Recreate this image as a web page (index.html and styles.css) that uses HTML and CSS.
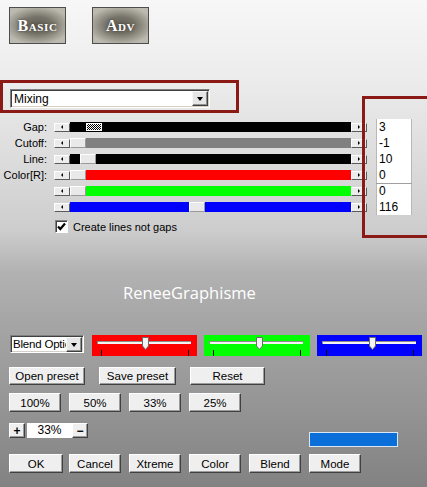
FILE: index.html
```html
<!DOCTYPE html>
<html>
<head>
<meta charset="utf-8">
<link rel="stylesheet" href="styles.css">
</head>
<body>
<div class="app">
  <div class="tabs">
    <div class="tab">Basic</div>
    <div class="tab">Adv</div>
  </div>

  <div class="mode-box">
    <div class="select mode-select">
      <span class="select-text">Mixing</span>
      <span class="drop"></span>
    </div>
  </div>

  <div class="sliders">
    <div class="row">
      <span class="label">Gap:</span>
      <span class="sbtn left"></span>
      <span class="track black"><span class="thumb dither" style="margin-left:16px"></span></span>
      <span class="sbtn right"></span>
      <span class="field">3</span>
    </div>
    <div class="row">
      <span class="label">Cutoff:</span>
      <span class="sbtn left"></span>
      <span class="track gray"><span class="thumb" style="margin-left:0px"></span></span>
      <span class="sbtn right"></span>
      <span class="field">-1</span>
    </div>
    <div class="row">
      <span class="label">Line:</span>
      <span class="sbtn left"></span>
      <span class="track black"><span class="thumb" style="margin-left:10px"></span></span>
      <span class="sbtn right"></span>
      <span class="field">10</span>
    </div>
    <div class="row">
      <span class="label">Color[R]:</span>
      <span class="sbtn left"></span>
      <span class="track red"><span class="thumb" style="margin-left:0px"></span></span>
      <span class="sbtn right"></span>
      <span class="field">0</span>
    </div>
    <div class="row">
      <span class="label"></span>
      <span class="sbtn left"></span>
      <span class="track green"><span class="thumb" style="margin-left:0px"></span></span>
      <span class="sbtn right"></span>
      <span class="field group-start">0</span>
    </div>
    <div class="row">
      <span class="label"></span>
      <span class="sbtn left"></span>
      <span class="track blue"><span class="thumb" style="margin-left:119px"></span></span>
      <span class="sbtn right"></span>
      <span class="field">116</span>
    </div>
  </div>

  <div class="check-row">
    <span class="checkbox"><svg width="11" height="11" viewBox="0 0 11 11"><path d="M2 5.5 L4.3 8 L9 2.5" fill="none" stroke="#000" stroke-width="2.2"/></svg></span>
    <span>Create lines not gaps</span>
  </div>

  <div class="brand">ReneeGraphisme</div>

  <div class="color-row">
    <div class="select blend-select">
      <span class="select-text">Blend Options</span>
      <span class="drop"></span>
    </div>
    <div class="swatch red-sw">
      <div class="groove"></div>
      <svg class="knob" style="left:50px" width="7" height="13" viewBox="0 0 7 13"><path d="M0.5 0.5H6.5V9L3.5 12.5L0.5 9Z" fill="#f2f2f2" stroke="#6a6a6a"/></svg>
      <div class="ticks"><span></span><span></span></div>
    </div>
    <div class="swatch green-sw">
      <div class="groove"></div>
      <svg class="knob" style="left:52px" width="7" height="13" viewBox="0 0 7 13"><path d="M0.5 0.5H6.5V9L3.5 12.5L0.5 9Z" fill="#f2f2f2" stroke="#6a6a6a"/></svg>
      <div class="ticks"><span></span><span></span></div>
    </div>
    <div class="swatch blue-sw">
      <div class="groove"></div>
      <svg class="knob" style="left:52px" width="7" height="13" viewBox="0 0 7 13"><path d="M0.5 0.5H6.5V9L3.5 12.5L0.5 9Z" fill="#f2f2f2" stroke="#6a6a6a"/></svg>
      <div class="ticks"><span></span><span></span></div>
    </div>
  </div>

  <div class="btn-row row-presets">
    <button class="btn w76">Open preset</button>
    <button class="btn w77">Save preset</button>
    <button class="btn w75">Reset</button>
  </div>

  <div class="btn-row row-zoom">
    <button class="btn w52">100%</button>
    <button class="btn w52">50%</button>
    <button class="btn w52">33%</button>
    <button class="btn w52">25%</button>
  </div>

  <div class="zoom-row">
    <button class="btn mini">+</button>
    <span class="zoom-field">33%</span>
    <button class="btn mini">&minus;</button>
    <span class="color-bar"></span>
  </div>

  <div class="btn-row row-bottom">
    <button class="btn w54">OK</button>
    <button class="btn w52">Cancel</button>
    <button class="btn w52">Xtreme</button>
    <button class="btn w52">Color</button>
    <button class="btn w52">Blend</button>
    <button class="btn w52">Mode</button>
  </div>

  <div class="annot"></div>
</div>
</body>
</html>
```

FILE: styles.css
```css
* { box-sizing: border-box; }
html, body { margin: 0; padding: 0; }
body { width: 427px; height: 487px; overflow: hidden; }

.app {
  position: relative;
  width: 427px;
  height: 487px;
  overflow: hidden;
  font-family: "Liberation Sans", Arial, sans-serif;
  font-size: 11px;
  color: #000;
  background: linear-gradient(#f7f7f7 0px, #ececec 80px, #dedede 150px, #cdcdcd 230px, #b2b2b2 272px, #a6a6a6 320px, #969696 400px, #828282 487px);
}

/* top tabs */
.tabs {
  display: flex;
  gap: 26px;
  padding: 7px 0 0 9px;
  height: 44px;
}
.tab {
  width: 57px;
  height: 37px;
  border: 1px solid #4d4d4d;
  background: radial-gradient(ellipse 60% 55% at 50% 50%, #5f5c53 0%, #76736a 45%, #a9a69c 85%, #bcb9b0 100%);
  color: #fff;
  font-family: "Liberation Serif", "Times New Roman", serif;
  font-variant: small-caps;
  font-weight: bold;
  font-size: 16px;
  letter-spacing: 0.6px;
  display: flex;
  align-items: center;
  justify-content: center;
  text-shadow: 0 0 3px #3a382f;
}

/* mode select box */
.mode-box {
  margin-top: 36px;
  width: 239px;
  height: 33px;
  border: 3px solid #8b1a17;
  padding: 6px 0 0 7px;
}
.select {
  position: relative;
  display: flex;
  align-items: center;
  background: #fff;
  border: 1px solid;
  border-color: #808080 #ffffff #ffffff #808080;
  box-shadow: inset 1px 1px #404040, inset -1px -1px #d4d0c8;
  overflow: hidden;
  font-size: 12px;
}
.mode-select { width: 200px; height: 19px; }
.select-text { padding-left: 3px; white-space: nowrap; flex: 1; overflow: hidden; }
.blend-select .select-text { font-size: 11.5px; padding-left: 2px; letter-spacing: -0.2px; }
.drop {
  flex: none;
  width: 16px;
  height: 15px;
  margin-right: 1px;
  background: #e6e6e6;
  border: 1px solid;
  border-color: #f8f8f8 #404040 #404040 #f8f8f8;
  box-shadow: inset -1px -1px #909090;
  display: flex;
  align-items: center;
  justify-content: center;
}
.drop::after {
  content: "";
  border-top: 4px solid #000;
  border-left: 3.5px solid transparent;
  border-right: 3.5px solid transparent;
  margin-top: 1px;
}

/* sliders */
.sliders { margin-top: 6px; }
.row {
  display: flex;
  align-items: center;
  height: 16px;
}
.label {
  width: 47px;
  margin-right: 7px;
  text-align: right;
  font-size: 11px;
  line-height: 16px;
}
.sbtn {
  width: 16px;
  height: 9px;
  background: #ececec;
  border: 1px solid;
  border-color: #ffffff #5a5a5a #5a5a5a #ffffff;
  display: flex;
  align-items: center;
  justify-content: center;
}
.sbtn.left::after {
  content: "";
  border-right: 2px solid #000;
  border-top: 2px solid transparent;
  border-bottom: 2px solid transparent;
}
.sbtn.right::after {
  content: "";
  border-left: 2px solid #000;
  border-top: 2px solid transparent;
  border-bottom: 2px solid transparent;
}
.track {
  width: 281px;
  height: 10px;
  display: flex;
}
.track.black { background: #000; }
.track.gray { background: #808080; }
.track.red { background: #ff0000; }
.track.green { background: #00ff00; }
.track.blue { background: #0000ff; }
.thumb {
  width: 16px;
  height: 10px;
  background: #e9e9e9;
  border: 1px solid;
  border-color: #ffffff #9a9a9a #9a9a9a #ffffff;
}
.thumb.dither {
  height: 8px;
  margin-top: 1px;
  border: 1px solid #fff;
  background-color: #fff;
  background-image: repeating-conic-gradient(#000 0 25%, #fff 0 50%);
  background-size: 2px 2px;
}
.field {
  margin-left: 9px;
  width: 36px;
  height: 16px;
  background: #fff;
  box-shadow: inset 1px 0 #b8b8b8, inset -1px 0 #b8b8b8;
  font-size: 12px;
  line-height: 16px;
  padding-left: 3px;
}
.field.group-start { border-top: 1px solid #a0a0a0; line-height: 15px; }

/* checkbox */
.check-row {
  margin-top: 5px;
  height: 13px;
  display: flex;
  align-items: center;
  gap: 5px;
  padding-left: 55px;
  font-size: 11px;
}
.checkbox {
  width: 13px;
  height: 13px;
  background: #fff;
  border: 1px solid;
  border-color: #808080 #ffffff #ffffff #808080;
  box-shadow: inset 1px 1px #404040;
  display: flex;
  align-items: center;
  justify-content: center;
}

/* brand */
.brand {
  margin-top: 50px;
  height: 20px;
  line-height: 20px;
  padding-left: 123px;
  color: #fff;
  font-family: "Open Sans", "Noto Sans", sans-serif;
  font-size: 16.5px;
}

/* colour row */
.color-row {
  margin-top: 32px;
  height: 21px;
  display: flex;
  align-items: flex-start;
  padding-left: 10px;
}
.blend-select { width: 74px; height: 18px; margin-right: 8px; }
.swatch {
  position: relative;
  height: 21px;
  padding-top: 6px;
}
.red-sw { width: 105px; background: #ff0000; margin-right: 7px; }
.green-sw { width: 106px; background: #00ff00; margin-right: 7px; }
.blue-sw { width: 105px; background: #0000ff; }
.groove {
  margin-left: 5px;
  width: 94px;
  height: 3px;
  background: #f4f4f4;
  border-top: 1px solid #8c8c8c;
  border-left: 1px solid #8c8c8c;
}
.knob { position: absolute; top: 2px; display: block; }
.ticks {
  display: flex;
  justify-content: space-between;
  margin: 6px 0 0 9px;
  width: 88px;
}
.ticks span { width: 1px; height: 6px; background: #000; }

/* buttons */
.btn {
  font-family: "Liberation Sans", Arial, sans-serif;
  font-size: 11.5px;
  color: #000;
  background: #efefef;
  border: 1px solid;
  border-color: #ffffff #404040 #404040 #ffffff;
  box-shadow: inset -1px -1px #9c9c9c;
  padding: 0;
  margin: 0;
  display: flex;
  align-items: center;
  justify-content: center;
}
.btn-row { display: flex; padding-left: 9px; }
.row-presets { margin-top: 11px; height: 18px; gap: 14px; }
.row-presets .btn { height: 18px; }
.row-zoom { margin-top: 8px; height: 19px; gap: 8px; }
.row-zoom .btn { height: 19px; }
.row-bottom { margin-top: 7px; height: 19px; gap: 8px; }
.row-bottom .btn { height: 19px; }
.row-bottom .w54 { margin-right: -2px; }
.w52 { width: 52px; }
.w54 { width: 54px; }
.w75 { width: 75px; }
.w76 { width: 76px; }
.w77 { width: 77px; }

.zoom-row {
  margin-top: 11px;
  height: 24px;
  display: flex;
  align-items: flex-start;
  padding-left: 9px;
}
.btn.mini {
  width: 16px;
  height: 15px;
  font-weight: bold;
  font-size: 12px;
}
.zoom-field {
  margin-left: 2px;
  width: 45px;
  height: 15px;
  background: #fff;
  text-align: center;
  font-size: 12px;
  line-height: 15px;
}
.color-bar {
  margin-left: 221px;
  margin-top: 9px;
  width: 89px;
  height: 15px;
  background: #0a6fd8;
  border: 1px solid #d8e6f6;
}

/* annotation frame */
.annot {
  position: absolute;
  left: 362px;
  top: 96px;
  width: 80px;
  height: 142px;
  border: 3px solid #8b1a17;
}
```
